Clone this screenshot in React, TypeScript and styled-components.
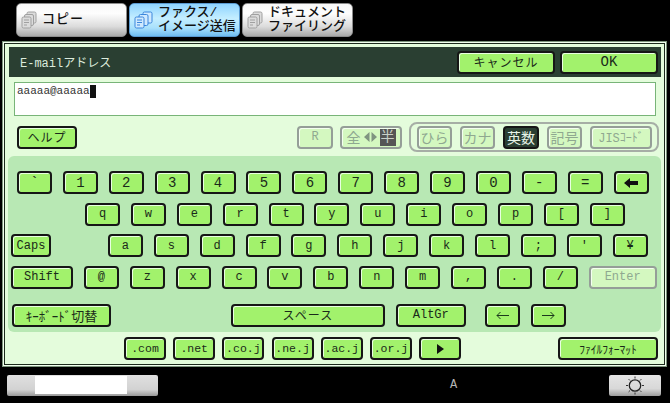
import styled, { createGlobalStyle } from 'styled-components'

const Global = createGlobalStyle`
  html, body {
    margin: 0;
    padding: 0;
    background: #000;
    overflow: hidden;
  }
  * { box-sizing: border-box; }
`

const FONT = `"Liberation Mono", "Noto Sans CJK JP", monospace`

const Page = styled.div`
  width: 670px;
  height: 403px;
  display: flex;
  flex-direction: column;
  background: #000;
  font-family: ${FONT};
  color: #1c2a1c;
`

const TabBar = styled.div`
  height: 41px;
  padding: 3px 0 0 16px;
  display: flex;
  gap: 2px;
`

const Tab = styled.div<{ $active?: boolean }>`
  width: 111px;
  height: 34px;
  border-radius: 5px;
  border: 1px solid ${p => (p.$active ? '#5a9ad0' : '#8c8c8c')};
  background: ${p =>
    p.$active
      ? 'linear-gradient(#8fd4ff 0%, #c4eeff 45%, #a8e0fc 75%, #6fbdf0 100%)'
      : 'linear-gradient(#f8f8f8 0%, #fdfdfd 30%, #dcdcdc 70%, #a8a8a8 100%)'};
  display: flex;
  align-items: center;
  gap: 5px;
  padding-left: 4px;
  color: #111;
`

const TabLabel = styled.div<{ $wide?: boolean }>`
  font-size: 13px;
  line-height: 14px;
  font-weight: 500;
  letter-spacing: ${p => (p.$wide ? '1px' : '0')};
  white-space: nowrap;
`

const Panel = styled.div`
  margin-left: 2px;
  width: 665px;
  height: 326px;
  border: 1px solid #111;
  outline: 1px solid #7c947c;
  outline-offset: -1px;
  box-shadow: inset 0 0 0 1px #f4fff0, inset 0 0 0 2px #1a2a1a;
  background: #e4fcdc;
  padding: 5px 5px 0 6px;
  display: flex;
  flex-direction: column;
`

const Header = styled.div`
  height: 30px;
  background: #2a3f32;
  display: flex;
  align-items: center;
  gap: 5px;
  padding: 0 3px 0 11px;
`

const Title = styled.div`
  flex: 1;
  color: #dcebdc;
  font-size: 12px;
`

const Input = styled.div`
  margin: 5px 5px 0;
  height: 34px;
  background: #fff;
  border: 1px solid #78b478;
  padding: 2px;
  font-size: 11px;
  line-height: 13px;
  color: #333;
  display: flex;
  align-items: flex-start;
`

const Caret = styled.span`
  display: inline-block;
  width: 6px;
  height: 13px;
  background: #111;
`

const Toolbar = styled.div`
  margin-top: 6px;
  height: 30px;
  padding-left: 8px;
  display: flex;
  align-items: center;
`

const ModeGroup = styled.div`
  margin-left: 7px;
  width: 250px;
  height: 30px;
  border: 2px solid #a6aea6;
  border-radius: 8px;
  padding-left: 6px;
  display: flex;
  align-items: center;
  gap: 8px;
`

const Key = styled.div<{ $w?: number; $size?: number; $h?: number; $after?: number; $track?: number }>`
  flex: none;
  width: ${p => p.$w ?? 35}px;
  height: ${p => p.$h ?? 23}px;
  margin-right: ${p => p.$after ?? 0}px;
  border: 2px solid #161616;
  border-radius: 4px;
  background: #a2f26c;
  box-shadow: inset 1px 1px 0 #e8ffe0;
  display: flex;
  align-items: center;
  justify-content: center;
  font-size: ${p => p.$size ?? 12}px;
  letter-spacing: ${p => p.$track ?? 0}px;
  color: #1a2a1a;
  white-space: nowrap;
  overflow: hidden;
`

const OffKey = styled(Key)`
  border-color: #959e98;
  background: #d4f8c0;
  box-shadow: inset 1px 1px 0 #f4fff0;
  color: #8fa890;
`

const OnKey = styled(Key)`
  background: #2a3f32;
  color: #e8f4e8;
  box-shadow: none;
`

const WidthPick = styled(OffKey)`
  gap: 2px;
  margin: 0 0 0 7px;
`

const HalfMark = styled.span`
  background: #555;
  color: #c8d0c8;
  width: 16px;
  text-align: center;
  line-height: 17px;
`

const Keyboard = styled.div`
  margin: 4px 0 0 -1px;
  height: 176px;
  padding-top: 15px;
  background: #b8e8b4;
  border-radius: 6px;
  display: flex;
  flex-direction: column;
`

const KeyRow = styled.div<{ $left: number; $top?: number }>`
  display: flex;
  gap: 10.9px;
  padding-left: ${p => p.$left}px;
  margin-top: ${p => p.$top ?? 8.5}px;
`

const LinkRow = styled.div`
  margin-top: 5px;
  padding: 0 3px 0 115px;
  display: flex;
  gap: 7.2px;
`

const FormatKey = styled(Key)`
  margin-left: auto;
`

const StatusBar = styled.div`
  flex: 1;
  display: flex;
  align-items: center;
  padding: 0 9px 0 7px;
`

const Slider = styled.div`
  width: 151px;
  height: 21px;
  border-radius: 2px;
  padding: 0 31px 0 28px;
  display: flex;
  background: linear-gradient(#e0e0e0 0%, #d2d2d2 70%, #989898 100%);
`

const SliderFill = styled.div`
  flex: 1;
  height: 18px;
  margin-top: 1px;
  background: #fff;
`

const Letter = styled.div`
  margin-left: 292px;
  color: #b4b4b4;
  font-size: 12px;
`

const SunButton = styled.div`
  margin-left: auto;
  width: 52px;
  height: 21px;
  border-radius: 2px;
  background: linear-gradient(#e4e4e4 0%, #d8d8d8 65%, #9c9c9c 100%);
  display: flex;
  align-items: center;
  justify-content: center;
`

const StackIcon = ({ color, edge, wide }: { color: string; edge: string; wide?: boolean }) => (
  <svg width={wide ? 19 : 16} height="18" viewBox={wide ? '0 0 19 18' : '0 0 16 18'}>
    <rect x={wide ? 9 : 6} y="1" width="9" height="11" rx="1.5" fill={color} stroke={edge} />
    <rect x={wide ? 5 : 3.5} y="3.5" width="9" height="11" rx="1.5" fill={color} stroke={edge} />
    <rect x="1" y="6" width="9" height="11" rx="1.5" fill={color} stroke={edge} />
    <path d="M3 9h5M3 11.5h5M3 14h3" stroke={edge} fill="none" />
  </svg>
)

const ThinArrow = ({ flip }: { flip?: boolean }) => (
  <svg width="13" height="9" viewBox="0 0 13 9" style={flip ? { transform: 'scaleX(-1)' } : undefined}>
    <path d="M13 4.5H1M4.5 1L1 4.5 4.5 8" stroke="#1c3a1c" fill="none" />
  </svg>
)

const SunIcon = () => (
  <svg width="20" height="19" viewBox="0 0 20 19">
    <circle cx="10" cy="9.5" r="5.7" fill="none" stroke="#222" strokeWidth="1.3" />
    <path
      d="M10 .5v2M10 16.5v2M1 9.5h2M17 9.5h2M3.6 3.1l1.4 1.4M15 14.5l1.4 1.4M3.6 15.9L5 14.5M15 4.5l1.4-1.4"
      stroke="#333"
      fill="none"
    />
  </svg>
)

const row1 = ['`', '1', '2', '3', '4', '5', '6', '7', '8', '9', '0', '-', '=']
const row2 = ['q', 'w', 'e', 'r', 't', 'y', 'u', 'i', 'o', 'p', '[', ']']
const row3 = ['a', 's', 'd', 'f', 'g', 'h', 'j', 'k', 'l', ';', "'", '¥']
const row4 = ['@', 'z', 'x', 'c', 'v', 'b', 'n', 'm', ',', '.', '/']
const links = ['.com', '.net', '.co.j', '.ne.j', '.ac.j', '.or.j']

function App() {
  return (
    <Page>
      <Global />
      <TabBar>
        <Tab>
          <StackIcon color="#dcdcdc" edge="#a0a0a0" />
          <TabLabel $wide>コピー</TabLabel>
        </Tab>
        <Tab $active>
          <StackIcon color="#cfeaff" edge="#3a86dc" wide />
          <TabLabel>ファクス/<br />イメージ送信</TabLabel>
        </Tab>
        <Tab>
          <StackIcon color="#dcdcdc" edge="#a0a0a0" />
          <TabLabel>ドキュメント<br />ファイリング</TabLabel>
        </Tab>
      </TabBar>
      <Panel>
        <Header>
          <Title>E-mailアドレス</Title>
          <Key $w={98} $track={1}>キャンセル</Key>
          <Key $w={98} $size={14}>OK</Key>
        </Header>
        <Input>aaaaa@aaaaa<Caret /></Input>
        <Toolbar>
          <Key $w={60} $after={220} $track={1}>ヘルプ</Key>
          <OffKey $w={36}>R</OffKey>
          <WidthPick $w={62} $size={14}>
            全
            <svg width="15" height="10" viewBox="0 0 15 10">
              <path d="M6.5 0v10L1 5zM8.5 0v10L14 5z" fill="#7f9480" />
            </svg>
            <HalfMark>半</HalfMark>
          </WidthPick>
          <ModeGroup>
            <OffKey $size={14}>ひら</OffKey>
            <OffKey $size={14}>カナ</OffKey>
            <OnKey $size={14} $w={36}>英数</OnKey>
            <OffKey $size={14}>記号</OffKey>
            <OffKey $w={62}>JISｺｰﾄﾞ</OffKey>
          </ModeGroup>
        </Toolbar>
        <Keyboard>
          <KeyRow $left={9} $top={0}>
            {row1.map(k => <Key key={k} $size={14}>{k}</Key>)}
            <Key>
              <svg width="14" height="10" viewBox="0 0 14 10">
                <path d="M0 5l6-5v3h8v4H6v3z" fill="#111" />
              </svg>
            </Key>
          </KeyRow>
          <KeyRow $left={77}>
            {row2.map(k => <Key key={k}>{k}</Key>)}
          </KeyRow>
          <KeyRow $left={3}>
            <Key $w={40} $after={46}>Caps</Key>
            {row3.map(k => <Key key={k}>{k}</Key>)}
          </KeyRow>
          <KeyRow $left={3}>
            <Key $w={62}>Shift</Key>
            {row4.map(k => <Key key={k}>{k}</Key>)}
            <OffKey $w={68}>Enter</OffKey>
          </KeyRow>
          <KeyRow $left={4} $top={15}>
            <Key $w={99} $after={109} $size={13}>ｷｰﾎﾞｰﾄﾞ切替</Key>
            <Key $w={154} $track={1}>スペース</Key>
            <Key $w={70} $after={8}>AltGr</Key>
            <Key><ThinArrow /></Key>
            <Key><ThinArrow flip /></Key>
          </KeyRow>
        </Keyboard>
        <LinkRow>
          {links.map(k => <Key key={k} $w={42} $size={11.5}>{k}</Key>)}
          <Key $w={42}>
            <svg width="7" height="10" viewBox="0 0 7 10">
              <path d="M0 0l7 5-7 5z" fill="#111" />
            </svg>
          </Key>
          <FormatKey $w={100} $size={11.5}>ﾌｧｲﾙﾌｫｰﾏｯﾄ</FormatKey>
        </LinkRow>
      </Panel>
      <StatusBar>
        <Slider><SliderFill /></Slider>
        <Letter>A</Letter>
        <SunButton><SunIcon /></SunButton>
      </StatusBar>
    </Page>
  )
}

export default App
